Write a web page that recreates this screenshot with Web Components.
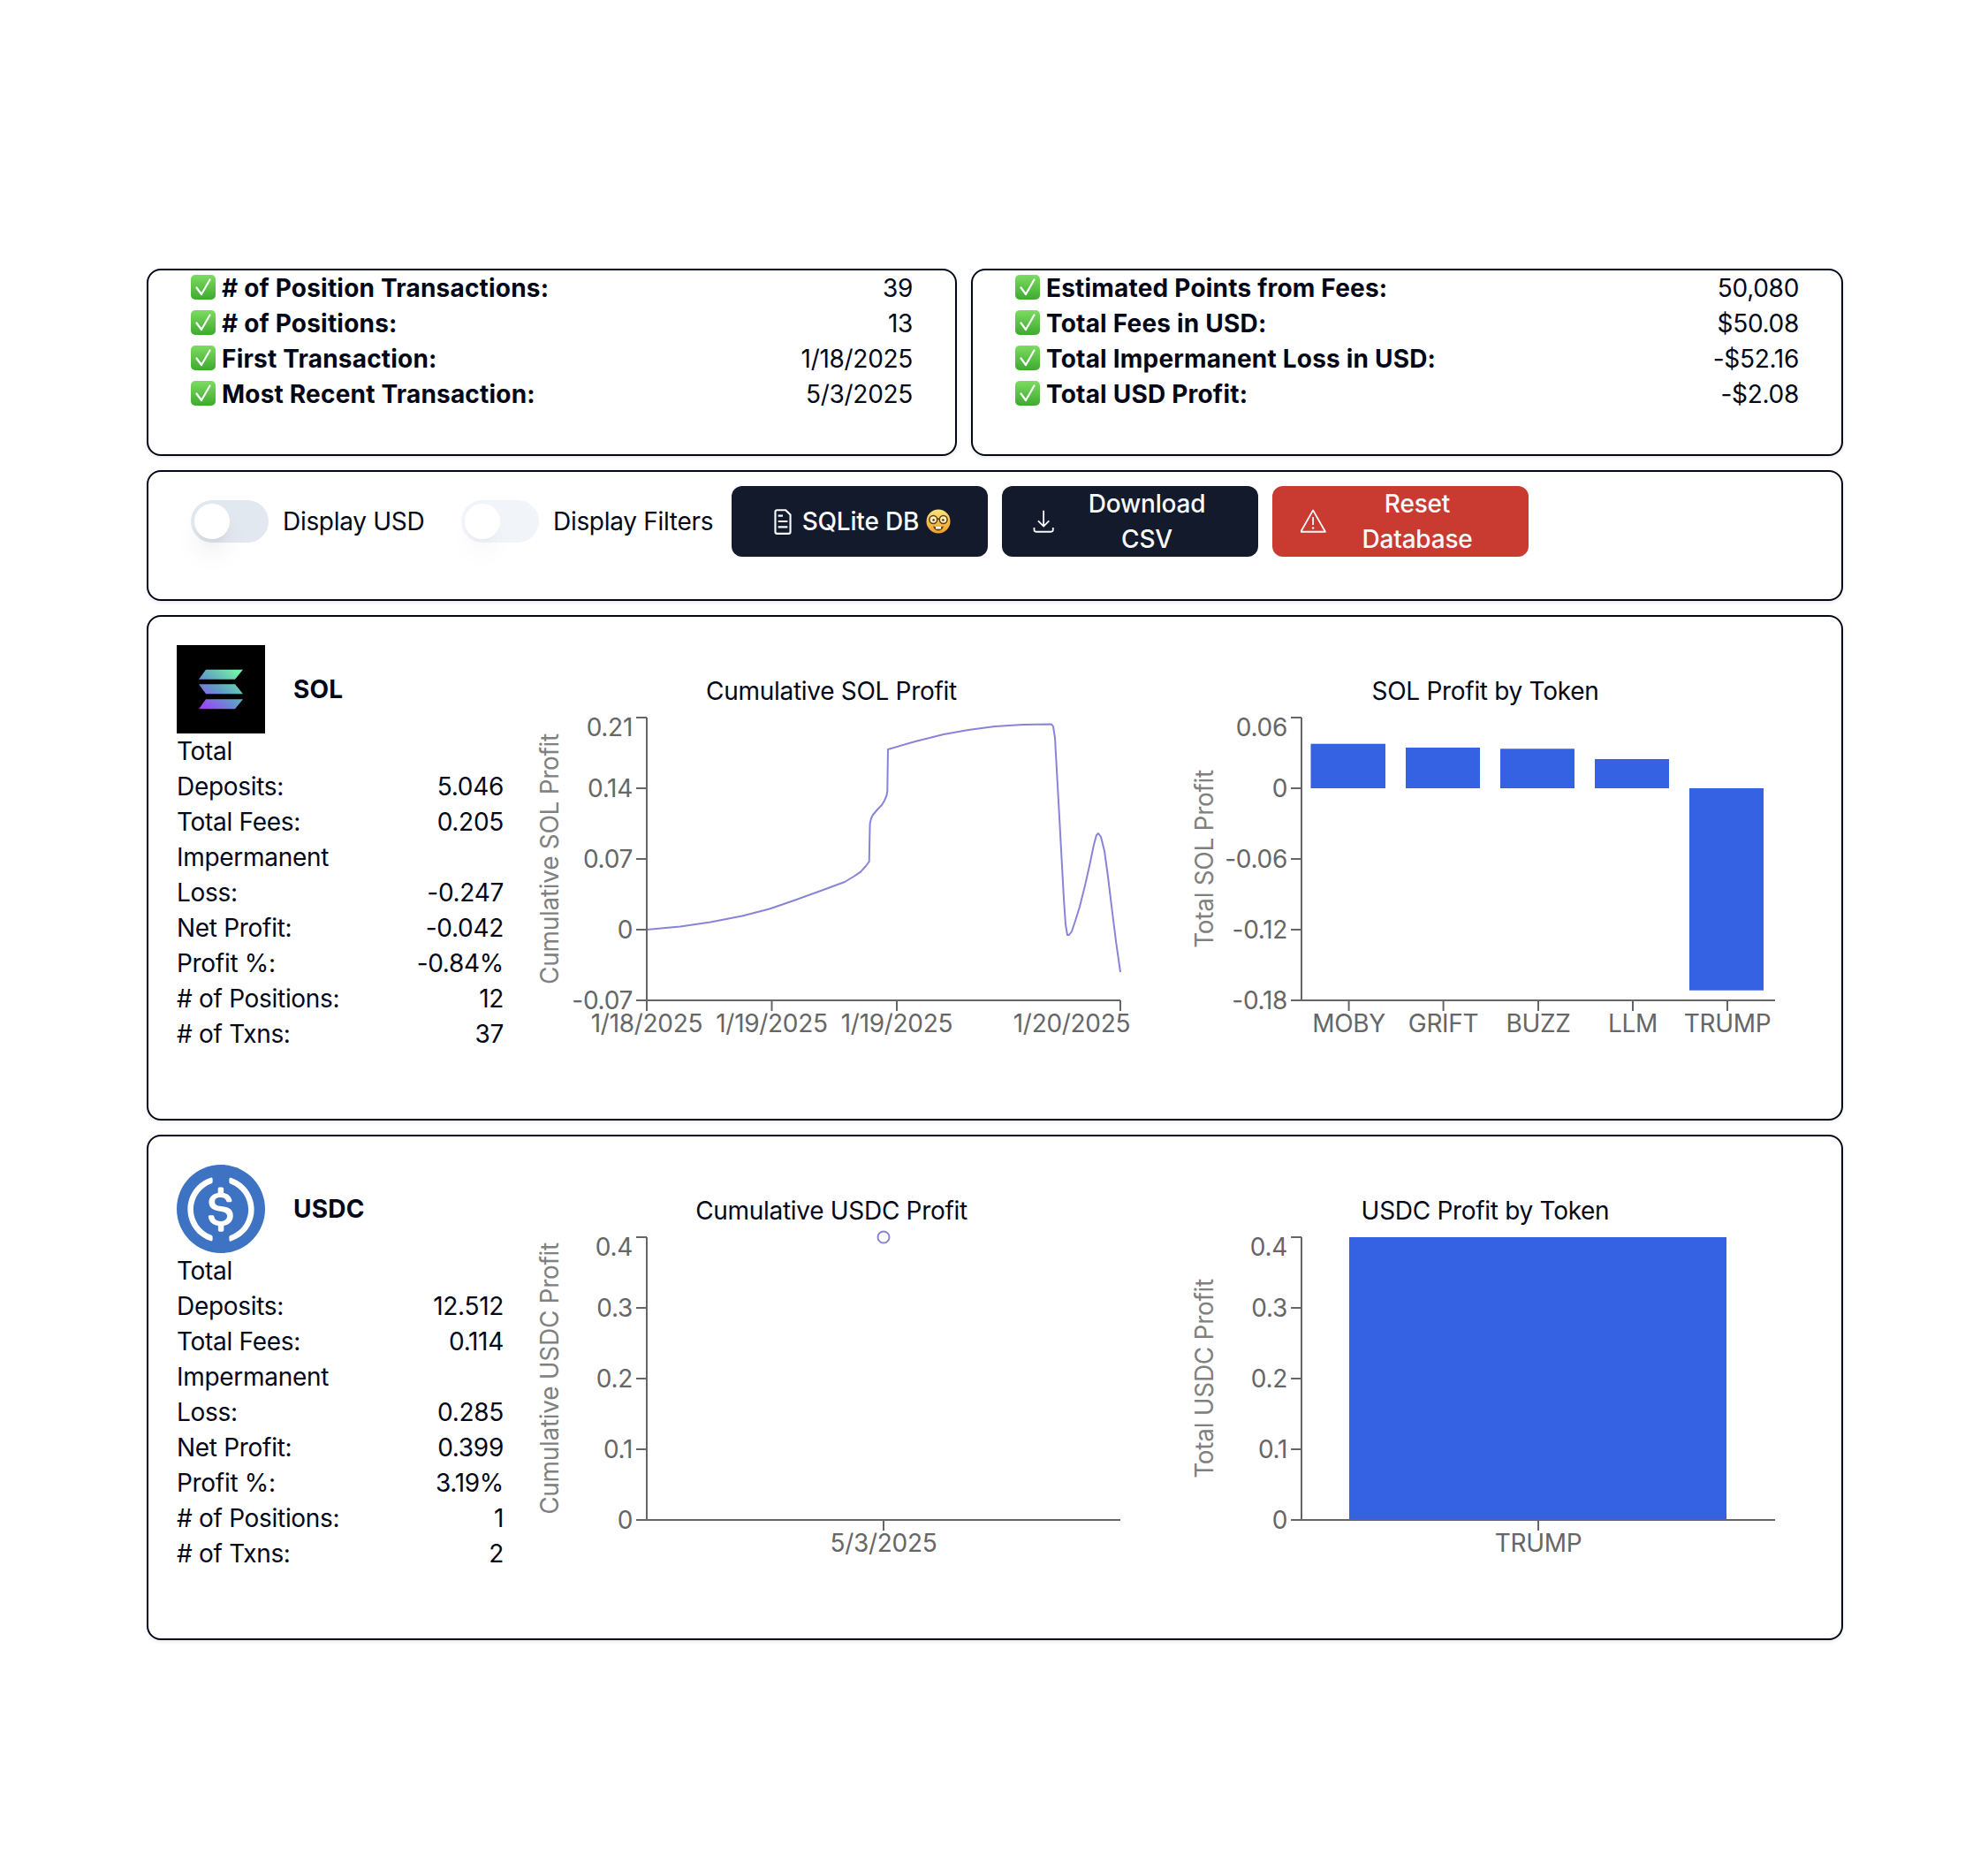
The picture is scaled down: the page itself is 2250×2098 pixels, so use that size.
<!DOCTYPE html>
<html>
<head>
<meta charset="utf-8">
<title>Dashboard</title>
<style>
  html, body { margin: 0; padding: 0; background: #fff; }
  body { font-family: Inter, "Liberation Sans", sans-serif; font-size: 28px; line-height: 40px; color: #020817; letter-spacing: -0.3px; }
</style>
</head>
<body>

<dash-page>
  <summary-card style="--w:917px">
    <summary-row value="39"># of Position Transactions:</summary-row>
    <summary-row value="13"># of Positions:</summary-row>
    <summary-row value="1/18/2025">First Transaction:</summary-row>
    <summary-row value="5/3/2025">Most Recent Transaction:</summary-row>
  </summary-card>
  <summary-card style="--w:987px">
    <summary-row value="50,080">Estimated Points from Fees:</summary-row>
    <summary-row value="$50.08">Total Fees in USD:</summary-row>
    <summary-row value="-$52.16">Total Impermanent Loss in USD:</summary-row>
    <summary-row value="-$2.08">Total USD Profit:</summary-row>
  </summary-card>

  <control-bar>
    <display-toggle style="--w:306px">Display USD</display-toggle>
    <display-toggle class="off" style="--w:306px;--track:#f1f5f9;--knob-shadow:.5">Display Filters</display-toggle>
    <action-button icon="file">SQLite DB <nerd-emoji></nerd-emoji></action-button>
    <action-button icon="download">Download CSV</action-button>
    <action-button icon="warn" style="--bg:#c93a31">Reset Database</action-button>
  </control-bar>

  <token-card name="SOL">
    <svg slot="logo" width="100" height="100" viewBox="0 0 100 100">
      <defs>
        <linearGradient id="solgrad" gradientUnits="userSpaceOnUse" x1="32" y1="72" x2="66" y2="28">
          <stop offset="0" stop-color="#9a45fa"/>
          <stop offset=".5" stop-color="#5f9fc4"/>
          <stop offset="1" stop-color="#74f0a6"/>
        </linearGradient>
      </defs>
      <rect width="100" height="100" fill="#000"/>
      <path fill="url(#solgrad)" d="M33 27.7H75L66 38.7H25ZM25 44.3H66L75 55.3H33ZM33 61.3H75L66 72.3H25Z"/>
    </svg>
    <stat-row value="5.046">Total Deposits:</stat-row>
    <stat-row value="0.205">Total Fees:</stat-row>
    <stat-row value="-0.247">Impermanent Loss:</stat-row>
    <stat-row value="-0.042">Net Profit:</stat-row>
    <stat-row value="-0.84%">Profit %:</stat-row>
    <stat-row value="12"># of Positions:</stat-row>
    <stat-row value="37"># of Txns:</stat-row>
    <profit-chart slot="charts" chart="solLine"></profit-chart>
    <profit-chart slot="charts" chart="solBar"></profit-chart>
  </token-card>

  <token-card name="USDC">
    <svg slot="logo" width="100" height="100" viewBox="0 0 2000 2000">
      <path fill="#3e73c4" d="M1000 2000c554.17 0 1000-445.83 1000-1000S1554.17 0 1000 0 0 445.83 0 1000s445.83 1000 1000 1000z"/>
      <path fill="#fff" d="M1275 1158.33c0-145.83-87.5-195.83-262.5-216.66-125-16.67-150-50-150-108.34s41.67-95.83 125-95.83c75 0 116.67 25 137.5 87.5 4.17 12.5 16.67 20.83 29.17 20.83h66.66c16.67 0 29.17-12.5 29.17-29.16v-4.17c-16.67-91.67-91.67-162.5-187.5-170.83v-100c0-16.67-12.5-29.17-33.33-33.34h-62.5c-16.67 0-29.17 12.5-33.34 33.34v95.83c-125 16.67-204.16 100-204.16 204.17 0 137.5 83.33 191.66 258.33 212.5 116.67 20.83 154.17 45.83 154.17 112.5s-58.34 112.5-137.5 112.5c-108.34 0-145.84-45.84-158.34-108.34-4.16-16.66-16.66-25-29.16-25h-70.84c-16.66 0-29.16 12.5-29.16 29.17v4.17c16.66 104.16 83.33 179.16 220.83 200v100c0 16.66 12.5 29.16 33.33 33.33h62.5c16.67 0 29.17-12.5 33.34-33.33v-100c125-20.84 208.33-108.34 208.33-220.84z"/>
      <path fill="#fff" d="M787.5 1595.83c-325-116.66-491.67-479.16-370.83-800 62.5-175 200-308.33 370.83-370.83 16.67-8.33 25-20.83 25-41.67V325c0-16.67-8.33-29.17-25-33.33-4.17 0-12.5 0-16.67 4.16-395.83 125-612.5 545.84-487.5 941.67 75 233.33 254.17 412.5 487.5 487.5 16.67 8.33 33.34 0 37.5-16.67 4.17-4.16 4.17-8.33 4.17-16.66v-58.34c0-12.5-12.5-29.16-25-37.5zM1229.17 295.83c-16.67-8.33-33.34 0-37.5 16.67-4.17 4.17-4.17 8.33-4.17 16.67v58.33c0 16.67 12.5 33.33 25 41.67 325 116.66 491.67 479.16 370.83 800-62.5 175-200 308.33-370.83 370.83-16.67 8.33-25 20.83-25 41.67V1700c0 16.67 8.33 29.17 25 33.33 4.17 0 12.5 0 16.67-4.16 395.83-125 612.5-545.84 487.5-941.67-75-237.5-258.34-416.67-487.5-491.67z"/>
    </svg>
    <stat-row value="12.512">Total Deposits:</stat-row>
    <stat-row value="0.114">Total Fees:</stat-row>
    <stat-row value="0.285">Impermanent Loss:</stat-row>
    <stat-row value="0.399">Net Profit:</stat-row>
    <stat-row value="3.19%">Profit %:</stat-row>
    <stat-row value="1"># of Positions:</stat-row>
    <stat-row value="2"># of Txns:</stat-row>
    <profit-chart slot="charts" chart="usdcLine"></profit-chart>
    <profit-chart slot="charts" chart="usdcBar"></profit-chart>
  </token-card>
</dash-page>

<script>
// page shell: two summary cards on top, everything else full width
class DashPage extends HTMLElement {
  constructor() {
    super();
    this.attachShadow({ mode: "open" });
    this.shadowRoot.innerHTML = `
      <style>
        :host { display: block; box-sizing: border-box; width: 2250px; height: 2098px; padding: 304px 0 0 166px; overflow: hidden; }
        .grid { display: flex; flex-wrap: wrap; width: 1920px; gap: 16px; }
      </style>
      <div class="grid"><slot></slot></div>`;
  }
}

class SummaryCard extends HTMLElement {
  constructor() {
    super();
    this.attachShadow({ mode: "open" });
    this.shadowRoot.innerHTML = `
      <style>
        :host { display: block; box-sizing: border-box; width: var(--w); height: 212px; padding: 0 48px 48px;
                border: 2px solid #020817; border-radius: 16px; box-shadow: 0 2px 4px rgba(0,0,0,.08); }
      </style>
      <slot></slot>`;
  }
}

class SummaryRow extends HTMLElement {
  constructor() {
    super();
    this.attachShadow({ mode: "open" });
    this.shadowRoot.innerHTML = `
      <style>
        :host { display: flex; justify-content: space-between; height: 40px; line-height: 40px; }
        .label { display: flex; align-items: center; font-weight: 700; letter-spacing: 0.2px; }
        svg { margin-right: 7px; flex: none; position: relative; top: -1px; }
      </style>
      <span class="label">
        <svg width="28" height="28" viewBox="0 0 28 28">
          <defs><linearGradient id="g" x1="0" y1="0" x2="0" y2="1">
            <stop offset="0" stop-color="#7ddc62"/><stop offset="1" stop-color="#3fa92f"/>
          </linearGradient></defs>
          <rect x="0" y="0" width="28" height="28" rx="5" fill="url(#g)"/>
          <path d="M6.5 14.5 L12 22 L21.5 5.5" fill="none" stroke="#fff" stroke-width="2.2" stroke-linecap="round" stroke-linejoin="round"/>
        </svg>
        <slot></slot>
      </span>
      <span class="value"></span>`;
  }
  connectedCallback() {
    this.shadowRoot.querySelector(".value").textContent = this.getAttribute("value");
  }
}

class ControlBar extends HTMLElement {
  constructor() {
    super();
    this.attachShadow({ mode: "open" });
    this.shadowRoot.innerHTML = `
      <style>
        :host { display: flex; box-sizing: border-box; width: 1920px; height: 148px; padding: 16px 48px 0;
                gap: 16px; align-items: flex-start; border: 2px solid #020817; border-radius: 16px;
                box-shadow: 0 2px 4px rgba(0,0,0,.08); }
      </style>
      <slot></slot>`;
  }
}

class DisplayToggle extends HTMLElement {
  constructor() {
    super();
    this.attachShadow({ mode: "open" });
    this.shadowRoot.innerHTML = `
      <style>
        :host { display: flex; align-items: center; gap: 16px; height: 80px; width: var(--w); margin-right: -16px; }
        .track { position: relative; width: 88px; height: 48px; border-radius: 24px; background: var(--track, #e2e8f0); flex: none; }
        .knob { position: absolute; left: 4px; top: 4px; width: 40px; height: 40px; border-radius: 50%; background: #fff;
                box-shadow: 0 20px 30px -6px rgba(0,0,0,calc(.1 * var(--knob-shadow, 1))), 0 8px 12px -8px rgba(0,0,0,calc(.1 * var(--knob-shadow, 1))); }
      </style>
      <span class="track"><span class="knob"></span></span>
      <span><slot></slot></span>`;
  }
}

const buttonIcons = {
  file: `<path d="M3.5 2.5a1 1 0 0 1 1-1H9l2.5 2.5v9a1 1 0 0 1-1 1h-6a1 1 0 0 1-1-1z" fill="none" stroke="currentColor"/>
         <path d="M5 4.5h2.5M5 7.5h5M5 10.5h5" stroke="currentColor"/>`,
  download: `<g transform="translate(-.4 0)" stroke-width=".85"><path d="M7.5 1.8v8M4.6 7.2l2.9 2.9 2.9-2.9" fill="none" stroke="currentColor"/>
             <path d="M2.5 10.8v1.2a1 1 0 0 0 1 1h8a1 1 0 0 0 1-1v-1.2" fill="none" stroke="currentColor"/></g>`,
  warn: `<g transform="translate(-.9 0)" stroke-width=".85"><path d="M7.5 1.6L14 13H1z" fill="none" stroke="currentColor" stroke-linejoin="round"/>
         <path d="M7.5 5.2v4.2" stroke="currentColor"/><circle cx="7.5" cy="11" r=".6" fill="currentColor" stroke="none"/></g>`
};

class ActionButton extends HTMLElement {
  constructor() {
    super();
    this.attachShadow({ mode: "open" });
    this.shadowRoot.innerHTML = `
      <style>
        :host { display: flex; box-sizing: border-box; width: 290px; height: 80px; padding: 0 32px; align-items: center;
                justify-content: center; border-radius: 12px; background: var(--bg, #131a2c); color: #f8fafc;
                font-weight: 500; text-align: center; letter-spacing: -0.2px; }
        svg { width: 32px; height: 32px; flex: none; margin-right: 6px; }
        .text { display: block; }
      </style>
      <svg viewBox="0 0 15 15"></svg>
      <span class="text"><slot></slot></span>`;
  }
  connectedCallback() {
    this.shadowRoot.querySelector("svg").innerHTML = buttonIcons[this.getAttribute("icon")];
  }
}

class NerdEmoji extends HTMLElement {
  constructor() {
    super();
    this.attachShadow({ mode: "open" });
    this.shadowRoot.innerHTML = `
      <style>
        :host { display: inline-block; width: 28px; height: 28px; vertical-align: -4px; margin-left: 1px; }
      </style>
      <svg width="28" height="28" viewBox="0 0 28 28">
        <defs><linearGradient id="f" x1="0" y1="0" x2="0" y2="1">
          <stop offset="0" stop-color="#ffe27a"/><stop offset="1" stop-color="#f29e24"/>
        </linearGradient></defs>
        <circle cx="14" cy="14" r="13.5" fill="url(#f)"/>
        <path d="M8 19.5q6 2 12 0q-1.6 5-6 5t-6-5z" fill="#6b3d14"/>
        <rect x="11" y="20" width="6" height="2.6" fill="#fff"/>
        <circle cx="8.3" cy="12" r="4.4" fill="#ffeeb8" stroke="#5c3e14" stroke-width="1.5"/>
        <circle cx="19.7" cy="12" r="4.4" fill="#ffeeb8" stroke="#5c3e14" stroke-width="1.5"/>
        <path d="M12.7 11.2h2.6" stroke="#5c3e14" stroke-width="1.5"/>
        <circle cx="8.6" cy="12.4" r="1.2" fill="#3c2410"/><circle cx="19.4" cy="12.4" r="1.2" fill="#3c2410"/>
      </svg>`;
  }
}

class TokenCard extends HTMLElement {
  constructor() {
    super();
    this.attachShadow({ mode: "open" });
    this.shadowRoot.innerHTML = `
      <style>
        :host { display: grid; box-sizing: border-box; width: 1920px; height: 572px; padding: 32px 32px 0;
                grid-template-columns: 371px 740px 740px; border: 2px solid #020817; border-radius: 16px;
                box-shadow: 0 2px 4px rgba(0,0,0,.08); }
        .head { display: flex; align-items: center; gap: 32px; font-weight: 700; height: 100px; letter-spacing: 0.2px; }
        ::slotted(svg) { display: block; }
      </style>
      <div>
        <div class="head"><slot name="logo"></slot><span class="name"></span></div>
        <slot></slot>
      </div>
      <slot name="charts"></slot>`;
  }
  connectedCallback() {
    this.shadowRoot.querySelector(".name").textContent = this.getAttribute("name");
  }
}

class StatRow extends HTMLElement {
  constructor() {
    super();
    this.attachShadow({ mode: "open" });
    this.shadowRoot.innerHTML = `
      <style>
        :host { display: flex; justify-content: space-between; align-items: flex-end; width: 370px; }
        .label { width: 190px; }
      </style>
      <span class="label"><slot></slot></span>
      <span class="value"></span>`;
  }
  connectedCallback() {
    this.shadowRoot.querySelector(".value").textContent = this.getAttribute("value");
  }
}

// axis positions are the plot's own pixels inside the 740 wide svg
const chartData = {
  solLine: {
    title: "Cumulative SOL Profit", yLabel: "Cumulative SOL Profit", axisX: 161, endX: 697,
    yTicks: ["0.21", "0.14", "0.07", "0", "-0.07"],
    xTicks: [[161, "1/18/2025"], [302.5, "1/19/2025"], [444, "1/19/2025"], [697, "1/20/2025", 642]],
    line: [[732,1052],[770,1048.5],[804,1043.5],[840,1036.5],[871,1028.5],[900,1018.5],[929,1008],[956,998],[966,992],[974,986.7],[980,980],[983.7,975],[984.2,950],[984.6,932],[986,926],[988,922],[994,915],[998,911],[1001,906],[1003.5,900],[1004.3,895],[1005,848],[1036,839],[1068,831],[1096,826],[1126,822],[1158,820],[1190,819.5],[1192,822],[1194,835],[1199,925],[1204,1017],[1206,1046],[1208,1058],[1210,1058],[1213,1054],[1217,1042],[1222,1026],[1228,1002],[1233,980],[1238,956],[1241,945],[1243,943],[1246,947],[1250,963],[1254,992],[1258,1025],[1263,1065],[1268,1100]]
  },
  solBar: {
    title: "SOL Profit by Token", yLabel: "Total SOL Profit", axisX: 162, endX: 698,
    yTicks: ["0.06", "0", "-0.06", "-0.12", "-0.18"],
    xTicks: [[215.6, "MOBY"], [322.6, "GRIFT"], [430, "BUZZ"], [537, "LLM"], [644, "TRUMP"]],
    bars: [[172.5,84.5,841.7,892],[280,84,846,892],[387,84,847.3,892],[494,84,859,892],[601,84,892,1120.7]]
  },
  usdcLine: {
    title: "Cumulative USDC Profit", yLabel: "Cumulative USDC Profit", axisX: 161, endX: 697,
    yTicks: ["0.4", "0.3", "0.2", "0.1", "0"],
    xTicks: [[429, "5/3/2025"]],
    dot: [429, 10]
  },
  usdcBar: {
    title: "USDC Profit by Token", yLabel: "Total USDC Profit", axisX: 162, endX: 698,
    yTicks: ["0.4", "0.3", "0.2", "0.1", "0"],
    xTicks: [[430, "TRUMP"]],
    bars: [[216,427,812,1132]]
  }
};

class ProfitChart extends HTMLElement {
  constructor() {
    super();
    this.attachShadow({ mode: "open" });
    this.shadowRoot.innerHTML = `
      <style>
        :host { display: block; width: 740px; }
        .title { text-align: center; margin-top: 32px; height: 40px; }
        svg { display: block; font-family: Inter, "Liberation Sans", sans-serif; font-size: 28px; }
        .tick { fill: #666; }
        .ylabel { fill: #808080; }
      </style>
      <div class="title"></div>
      <svg width="740" height="420"></svg>`;
  }
  connectedCallback() {
    const c = chartData[this.getAttribute("chart")];
    this.shadowRoot.querySelector(".title").textContent = c.title;
    const top = 10, bottom = 330, step = 80;
    let s = "";

    // marks first, the axes are drawn over them
    if (c.bars) {
      for (const b of c.bars) {
        s += `<rect x="${b[0]}" y="${b[2] - 802}" width="${b[1]}" height="${b[3] - b[2]}" fill="#3562e3"/>`;
      }
    }
    if (c.line) {
      const pts = c.line.map(p => (p[0] - 571) + "," + (p[1] - 802)).join(" ");
      s += `<polyline points="${pts}" fill="none" stroke="#8884d8" stroke-width="2" stroke-linejoin="round"/>`;
    }
    if (c.dot) {
      s += `<circle cx="${c.dot[0]}" cy="${c.dot[1]}" r="6.5" fill="#fff" stroke="#8884d8" stroke-width="2"/>`;
    }

    s += `<path d="M${c.axisX} ${top}V${bottom}H${c.endX}" fill="none" stroke="#666" stroke-width="2"/>`;
    c.yTicks.forEach((t, i) => {
      const y = top + i * step;
      s += `<path d="M${c.axisX - 12} ${y}H${c.axisX}" stroke="#666" stroke-width="2"/>`;
      const ty = i === 0 ? y + 11.5 : y;
      s += `<text class="tick" x="${c.axisX - 16}" y="${ty}" dy=".355em" text-anchor="end">${t}</text>`;
    });
    for (const t of c.xTicks) {
      s += `<path d="M${t[0]} ${bottom}V${bottom + 12}" stroke="#666" stroke-width="2"/>`;
      s += `<text class="tick" x="${t[2] || t[0]}" y="356" dy=".355em" text-anchor="middle">${t[1]}</text>`;
    }
    const lx = c.axisX - 110;
    s += `<text class="ylabel" transform="translate(${lx} 170) rotate(-90)" dy=".355em" text-anchor="middle">${c.yLabel}</text>`;

    this.shadowRoot.querySelector("svg").innerHTML = s;
  }
}

customElements.define("dash-page", DashPage);
customElements.define("summary-card", SummaryCard);
customElements.define("summary-row", SummaryRow);
customElements.define("control-bar", ControlBar);
customElements.define("display-toggle", DisplayToggle);
customElements.define("action-button", ActionButton);
customElements.define("nerd-emoji", NerdEmoji);
customElements.define("token-card", TokenCard);
customElements.define("stat-row", StatRow);
customElements.define("profit-chart", ProfitChart);
</script>
</body>
</html>
